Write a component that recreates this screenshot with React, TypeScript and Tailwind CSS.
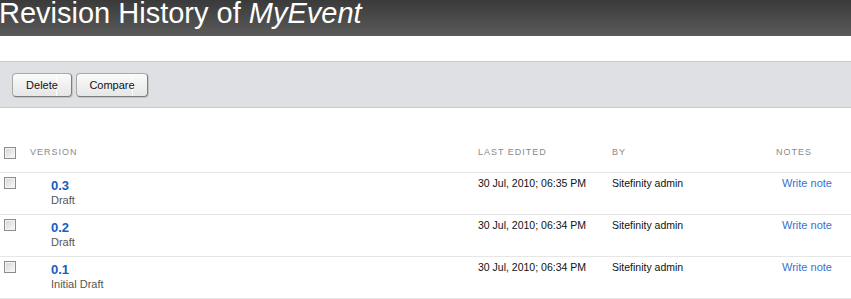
const revisions = [
  { version: '0.3', label: 'Draft', edited: '30 Jul, 2010; 06:35 PM', by: 'Sitefinity admin' },
  { version: '0.2', label: 'Draft', edited: '30 Jul, 2010; 06:34 PM', by: 'Sitefinity admin' },
  { version: '0.1', label: 'Initial Draft', edited: '30 Jul, 2010; 06:34 PM', by: 'Sitefinity admin' },
];

function Check() {
  return (
    <span className="block w-[12px] h-[12px] border border-[#8c8c8c] bg-gradient-to-br from-[#d4d4d4] to-[#fbfbfb] shadow-[inset_0_0_0_1px_#f4f4f4]" />
  );
}

function ToolButton({ label, w }: { label: string; w: string }) {
  return (
    <button
      className={`relative ${w} h-[24px] flex items-center justify-center rounded-[4px] border border-[#a9a9a9] border-r-[#7d7d7d] border-b-[#7d7d7d] bg-gradient-to-b from-[#fbfbfb] to-[#e6e6e6] text-[11px] text-[#111] shadow-[1px_1px_0_#c3c5c9]`}
    >
      <span className="absolute top-0 bottom-0 right-[14px] w-px bg-white" />
      <span className="relative">{label}</span>
    </button>
  );
}

export default function App() {
  return (
    <div className="w-[851px] h-[299px] overflow-hidden bg-white font-['Liberation_Sans',Arial,sans-serif]">
      <header className="h-[36px] bg-gradient-to-b from-[#3a3a3a] to-[#5b5b5b]">
        <h1 className="text-[29px] leading-[26px] text-white font-normal -ml-px">
          Revision History of <em>MyEvent</em>
        </h1>
      </header>

      <div className="mt-[25px] h-[47px] border-y border-[#c6c9cd] bg-[#dee0e4] flex items-center gap-[4px] pl-[12px] pt-[1px]">
        <ToolButton label="Delete" w="w-[60px]" />
        <ToolButton label="Compare" w="w-[72px]" />
      </div>

      <div className="pt-[38px]">
        <div className="grid grid-cols-[30px_448px_134px_164px_1fr] items-center pb-[13px] border-b border-[#e6e6e6] text-[9px] tracking-[1px] text-[#8a8a8a] leading-[13px]">
          <div className="pl-[4px]"><Check /></div>
          <div>VERSION</div>
          <div>LAST EDITED</div>
          <div>BY</div>
          <div>NOTES</div>
        </div>

        {revisions.map((r) => (
          <div
            key={r.version}
            className="grid grid-cols-[30px_448px_134px_164px_1fr] items-start h-[42px] border-b border-[#e6e6e6] text-[10.5px] leading-[13px] text-[#111]"
          >
            <div className="pl-[4px] pt-[4px]"><Check /></div>
            <div className="pl-[21px] pt-[5px]">
              <div className="text-[13px] leading-[16px] font-bold text-[#1560c0]">{r.version}</div>
              <div className="text-[11px] leading-[13px] text-[#555]">{r.label}</div>
            </div>
            <div className="pt-[4px]">{r.edited}</div>
            <div className="pt-[4px]">{r.by}</div>
            <div className="pt-[4px] pl-[6px]">
              <a className="text-[#3a6fd0] text-[11px] cursor-pointer">Write note</a>
            </div>
          </div>
        ))}
      </div>
    </div>
  );
}
